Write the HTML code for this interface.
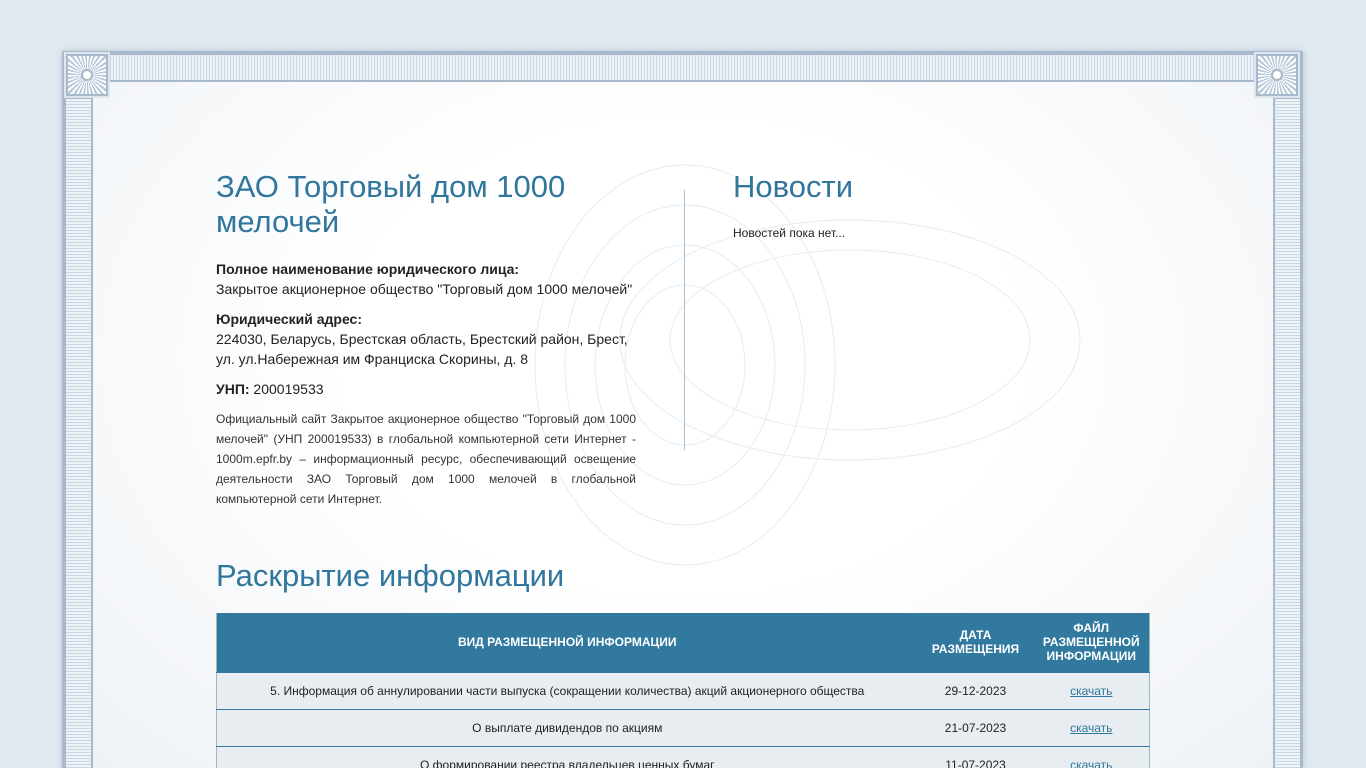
<!DOCTYPE html>
<html style="overflow:hidden;height:768px"><head><meta charset="utf-8">
<style>
*{margin:0;padding:0;box-sizing:border-box}
body{width:1366px;height:768px;overflow:hidden;background:#e1e9f0;font-family:"Liberation Sans",Arial,sans-serif;color:#222;position:relative}
.frame{position:absolute;left:62px;top:51px;width:1241px;height:717px;background:#a7b9cb;box-shadow:0 0 6px rgba(120,140,160,.4)}
.inner{position:absolute;left:93px;top:82px;width:1180px;height:686px;background:radial-gradient(ellipse at 50% 40%,#fff 40%,#eef2f6 100%)}
.bandT{position:absolute;left:110px;top:55px;width:1146px;height:25px;background:repeating-linear-gradient(90deg,#c8d5e2 0 1px,#eef3f8 1px 3px)}
.bandL{position:absolute;left:66px;top:99px;width:25px;height:669px;background:repeating-linear-gradient(0deg,#c8d5e2 0 1px,#eef3f8 1px 3px)}
.bandR{position:absolute;left:1275px;top:99px;width:25px;height:669px;background:repeating-linear-gradient(0deg,#c8d5e2 0 1px,#eef3f8 1px 3px)}
.corner{position:absolute;width:46px;height:46px;background:#a7b9cb;border:2px solid #dde6ee}
.corner div{position:absolute;inset:2px;background:repeating-conic-gradient(from 0deg at 50% 50%,#fff 0 6deg,#b6c7d8 6deg 12deg)}
.corner i{position:absolute;left:15px;top:15px;width:12px;height:12px;border:2px solid #a7b9cb;border-radius:50%;background:#fff}
h1,h2{font-weight:normal;color:#31769c}
.left{position:absolute;left:216px;top:169px;width:420px}
h1{font-size:31px;line-height:35px;margin-bottom:20px}
.p{font-size:14px;line-height:20px;margin-bottom:10px}
.small{font-size:12px;line-height:20px;text-align:justify;color:#333}
.news{position:absolute;left:733px;top:169px}
.vline{position:absolute;left:684px;top:190px;width:1px;height:260px;background:#a9bfd2}
.disc{position:absolute;left:216px;top:558px;font-size:31px}
table{position:absolute;left:216px;top:613px;width:934px;border-collapse:collapse;font-size:12px;text-align:center}
th{background:#31799f;color:#fff;font-weight:bold;height:59px;line-height:14px}
td{background:#e8edf1;height:37px;border-top:1px solid #31799f;color:#222}
table{border-left:1px solid #9bb;border-right:1px solid #9bb}
a{color:#31769c}
</style></head><body>
<div class="frame"></div>
<div class="inner"></div>
<svg style="position:absolute;left:400px;top:150px" width="700" height="420"><g fill="none" stroke="#e6ecf2" stroke-width="1">
<ellipse cx="285" cy="215" rx="150" ry="200"/><ellipse cx="285" cy="215" rx="120" ry="160"/><ellipse cx="285" cy="215" rx="90" ry="120"/><ellipse cx="450" cy="190" rx="230" ry="120"/><ellipse cx="450" cy="190" rx="180" ry="90"/><ellipse cx="285" cy="215" rx="60" ry="80"/></g></svg>
<div class="bandT"></div><div class="bandL"></div><div class="bandR"></div>
<div class="corner" style="left:64px;top:52px"><div></div><i></i></div>
<div class="corner" style="left:1254px;top:52px"><div></div><i></i></div>
<div class="vline"></div>
<div class="left">
<h1>ЗАО Торговый дом 1000 мелочей</h1>
<div class="p"><b>Полное наименование юридического лица:</b><br>Закрытое акционерное общество "Торговый дом 1000 мелочей"</div>
<div class="p"><b>Юридический адрес:</b><br>224030, Беларусь, Брестская область, Брестский район, Брест, ул. ул.Набережная им Франциска Скорины, д. 8</div>
<div class="p"><b>УНП:</b> 200019533</div>
<div class="small">Официальный сайт Закрытое акционерное общество "Торговый дом 1000 мелочей" (УНП 200019533) в глобальной компьютерной сети Интернет - 1000m.epfr.by – информационный ресурс, обеспечивающий освещение деятельности ЗАО Торговый дом 1000 мелочей в глобальной компьютерной сети Интернет.</div>
</div>
<div class="news"><h1 style="margin-bottom:22px">Новости</h1><div style="font-size:12px">Новостей пока нет...</div></div>
<h2 class="disc">Раскрытие информации</h2>
<table>
<tr><th>ВИД РАЗМЕЩЕННОЙ ИНФОРМАЦИИ</th><th style="width:116px">ДАТА<br>РАЗМЕЩЕНИЯ</th><th style="width:116px">ФАЙЛ<br>РАЗМЕЩЕННОЙ<br>ИНФОРМАЦИИ</th></tr>
<tr><td>5. Информация об аннулировании части выпуска (сокращении количества) акций акционерного общества</td><td>29-12-2023</td><td><a href="#">скачать</a></td></tr>
<tr><td>О выплате дивидендов по акциям</td><td>21-07-2023</td><td><a href="#">скачать</a></td></tr>
<tr><td>О формировании реестра владельцев ценных бумаг</td><td>11-07-2023</td><td><a href="#">скачать</a></td></tr>
</table>
</body></html>
